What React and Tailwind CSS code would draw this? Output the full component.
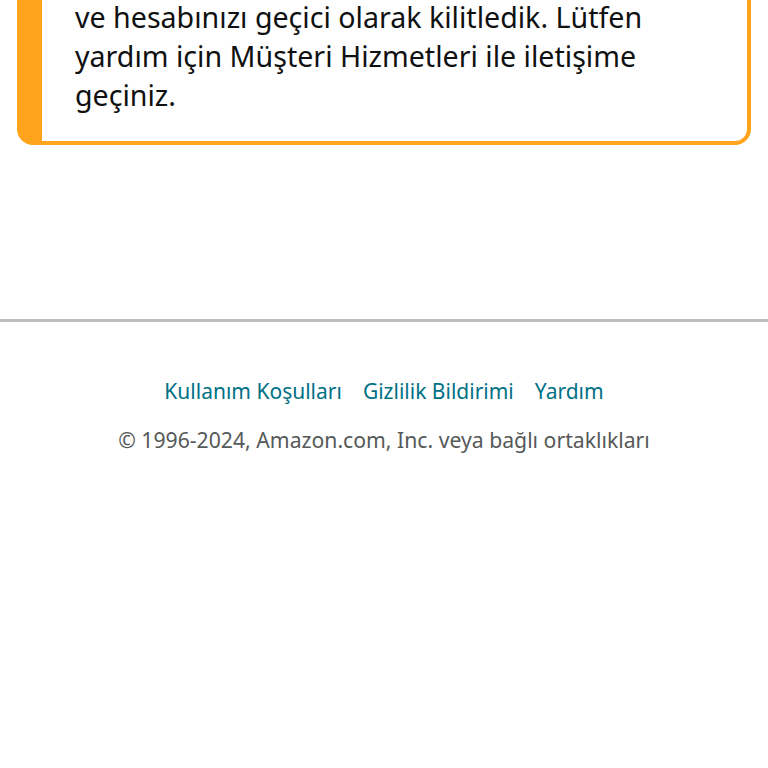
export default function App() {
  return (
    <div className="w-[768px] h-[768px] overflow-hidden bg-white" style={{ fontFamily: '"Noto Sans", "Open Sans", sans-serif' }}>
      <div className="ml-[17px] w-[734px] -mt-[60px] border-[#ffa41c] border-[4px] border-l-[25px] rounded-[16px] pt-[53px] pb-[27px] pl-[33px] pr-[10px]">
        <p className="text-[28.6px] leading-[39px] text-[#0f1111] whitespace-nowrap">
          ve hesabınızı geçici olarak kilitledik. Lütfen
          <br />
          yardım için Müşteri Hizmetleri ile iletişime
          <br />
          geçiniz.
        </p>
      </div>
      <div className="mt-[174px] h-[3px] bg-[#bdbdbd]" />
      <div className="mt-[55px] flex justify-center gap-[21px] text-[21px] leading-[28px] text-[#007185]">
        <span>Kullanım Koşulları</span>
        <span>Gizlilik Bildirimi</span>
        <span>Yardım</span>
      </div>
      <div className="mt-[21px] text-center text-[21.2px] leading-[28px] text-[#565959]">
        © 1996-2024, Amazon.com, Inc. veya bağlı ortaklıkları
      </div>
    </div>
  );
}
